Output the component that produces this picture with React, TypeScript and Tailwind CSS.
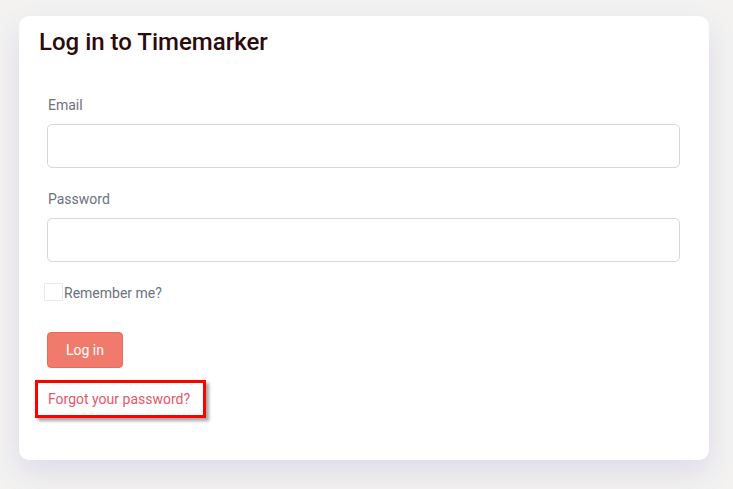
export default function App() {
  return (
    <div
      className="min-h-screen bg-[#f3f2f1] pt-4 pl-[19px] pr-6 pb-7"
      style={{ fontFamily: 'Roboto, "Liberation Sans", sans-serif' }}
    >
      <div className="w-[690px] rounded-[10px] bg-white pt-[10px] pb-[42px] shadow-[0_12px_28px_rgba(110,100,190,0.16)]">
        {/* Header */}
        <h1 className="pl-5 text-[24px] leading-8 font-medium text-[#2b0b0b]">
          Log in to Timemarker
        </h1>

        {/* Form */}
        <form className="mt-[37px] flex flex-col pl-7 pr-[29px]">
          <label className="pl-px text-sm leading-5 text-[#6b7280]">Email</label>
          <input
            type="email"
            className="mt-[9px] h-[44px] rounded-[5px] border border-[#d4d7dc] px-3 text-sm outline-none"
          />

          <label className="mt-[21px] pl-px text-sm leading-5 text-[#6b7280]">Password</label>
          <input
            type="password"
            className="mt-[9px] h-[44px] rounded-[5px] border border-[#d4d7dc] px-3 text-sm outline-none"
          />

          <div className="mt-[21px] -ml-[3px] flex items-start">
            <span className="h-[18px] w-[19px] border border-[#e8e9ec] bg-white" />
            <span className="pl-px text-sm leading-5 text-[#6b7280]">Remember me?</span>
          </div>

          <button
            type="button"
            className="mt-[29px] h-9 w-[76px] rounded-[4px] border border-[#ea6a5e] bg-[#f07b6d] text-sm text-white"
          >
            Log in
          </button>

          <div className="mt-3 -ml-3 self-start border-[3px] border-[#ff0000] pl-[10px] pr-[13px] py-[6px] shadow-[3px_3px_3px_rgba(0,0,0,0.35)]">
            <a href="#" className="block text-sm leading-5 text-[#e8566a]">
              Forgot your password?
            </a>
          </div>
        </form>
      </div>
    </div>
  );
}
